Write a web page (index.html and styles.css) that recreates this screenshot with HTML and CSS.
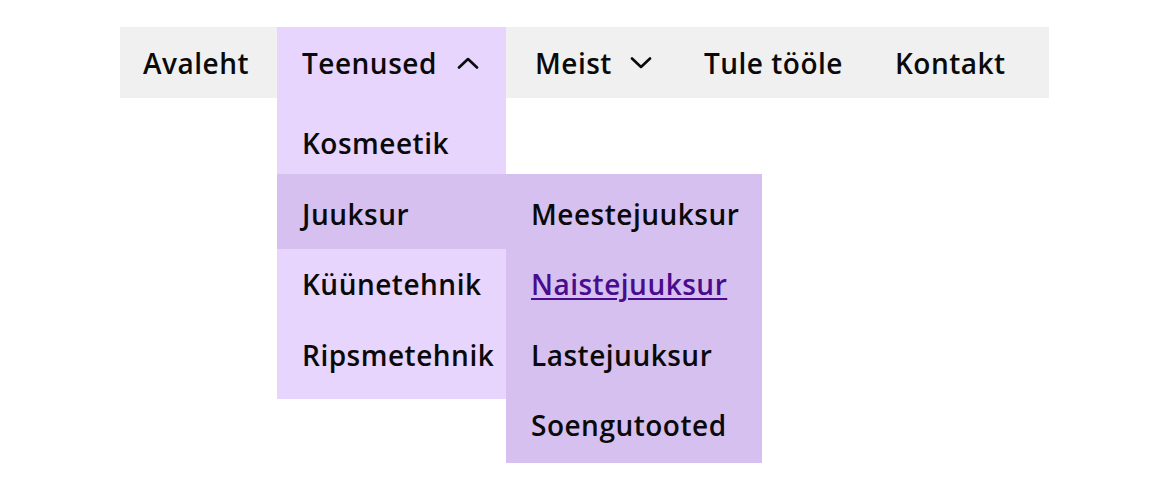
FILE: index.html
```html
<!DOCTYPE html>
<html lang="et">
<head>
<meta charset="utf-8">
<title>Menüü</title>
<link rel="stylesheet" href="styles.css">
</head>
<body>
<div class="wrap">
  <nav class="bar">
    <a class="bar-link home" href="#">Avaleht</a>
    <a class="bar-link services" href="#">Teenused
      <svg class="chev" viewBox="0 0 22 12" aria-hidden="true"><path d="M2 10.5 L11 2 L20 10.5"/></svg>
    </a>
    <a class="bar-link about" href="#">Meist
      <svg class="chev" viewBox="0 0 22 12" aria-hidden="true"><path d="M2 1.5 L11 10 L20 1.5"/></svg>
    </a>
    <a class="bar-link" href="#">Tule tööle</a>
    <a class="bar-link" href="#">Kontakt</a>
  </nav>
  <div class="drops">
    <div class="panel">
      <a class="row" href="#">Kosmeetik</a>
      <a class="row selected" href="#">Juuksur</a>
      <a class="row" href="#">Küünetehnik</a>
      <a class="row" href="#">Ripsmetehnik</a>
    </div>
    <div class="subpanel">
      <a class="row first" href="#">Meestejuuksur</a>
      <a class="row" href="#"><span class="current">Naistejuuksur</span></a>
      <a class="row" href="#">Lastejuuksur</a>
      <a class="row" href="#">Soengutooted</a>
    </div>
  </div>
</div>
</body>
</html>
```

FILE: styles.css
```css
* { box-sizing: border-box; }

html, body {
  margin: 0;
  padding: 0;
  background: #ffffff;
}

body {
  font-family: "Open Sans", "DejaVu Sans", sans-serif;
  font-weight: 600;
  font-size: 28px;
  letter-spacing: 0.5px;
  color: #0a0a0a;
}

a {
  color: inherit;
  text-decoration: none;
}

.wrap {
  padding: 27px 0 0 120px;
}

.bar {
  display: flex;
  width: 929px;
  height: 71px;
  background: #f0f0f0;
}

.bar-link {
  display: flex;
  align-items: center;
  padding: 0 26px;
  line-height: 1;
  white-space: nowrap;
}

.home {
  width: 157px;
  padding-left: 23px;
  padding-right: 0;
}

.services {
  width: 229px;
  padding-left: 25px;
  padding-right: 27px;
  background: #e7d5fd;
}

.about {
  padding-left: 29px;
}

.chev {
  width: 22px;
  height: 12px;
  margin-left: auto;
  fill: none;
  stroke: #0a0a0a;
  stroke-width: 2.6;
  stroke-linecap: round;
  stroke-linejoin: round;
}

.about .chev {
  margin-left: 18px;
}

.drops {
  display: flex;
  align-items: flex-start;
  padding-left: 157px;
}

.panel {
  display: flex;
  flex-direction: column;
  width: 229px;
  padding: 10px 0 9px;
  background: #e7d5fd;
}

.subpanel {
  display: flex;
  flex-direction: column;
  width: 256px;
  margin-top: 76px;
  padding-bottom: 2.5px;
  background: #d6c0ef;
}

.row {
  display: flex;
  align-items: center;
  height: 70.5px;
  padding-left: 25px;
  line-height: 1;
  white-space: nowrap;
}

.row.selected {
  height: 75px;
  margin-top: -4.5px;
  padding-top: 4.5px;
  background: #d6c0ef;
}

.row.first {
  height: 75px;
  padding-top: 4.5px;
}

.current {
  color: #4a0b8c;
  text-decoration: underline;
  text-decoration-thickness: 2px;
  text-underline-offset: 3px;
}
```
